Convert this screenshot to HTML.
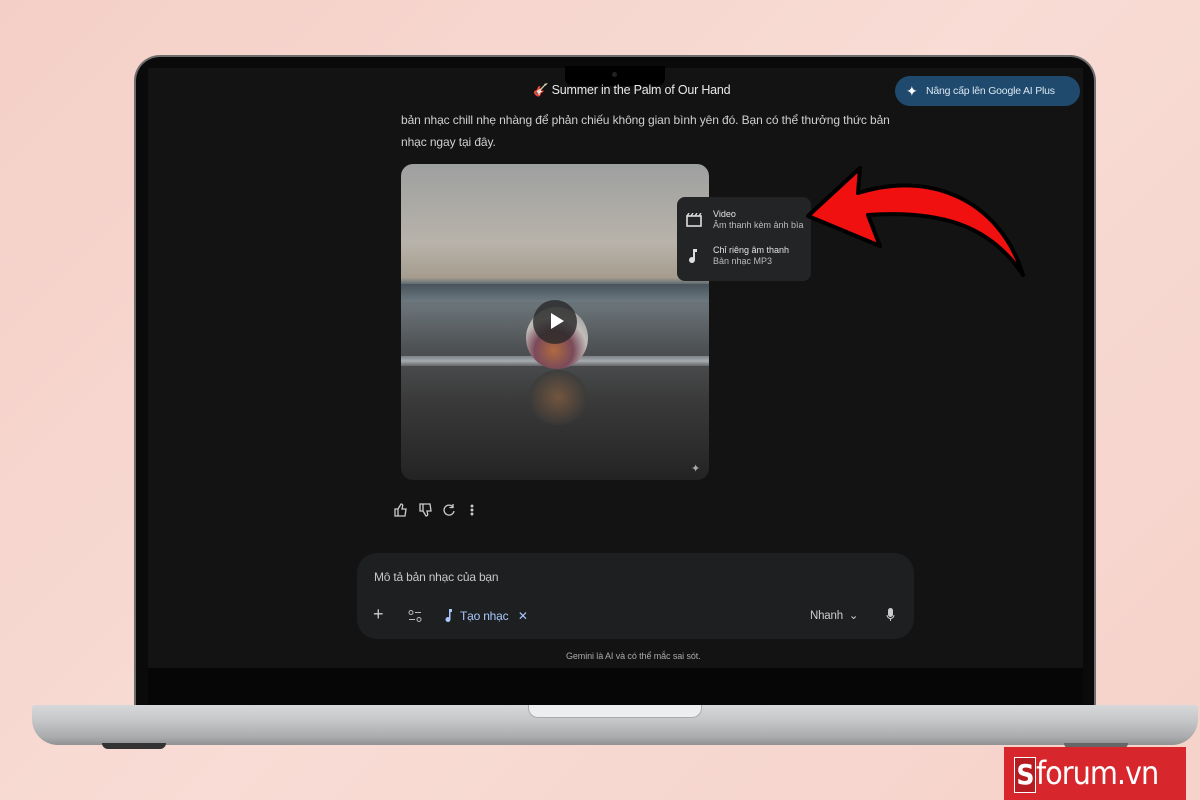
<!DOCTYPE html>
<html><head><meta charset="utf-8"><style>
*{margin:0;padding:0;box-sizing:border-box}
body{width:1200px;height:800px;overflow:hidden;position:relative;background:linear-gradient(135deg,#f4cfc7,#f8dcd5 50%,#f5d2ca);font-family:"Liberation Sans","Noto Sans CJK SC",sans-serif}
.abs{position:absolute}
</style></head><body>
<div class="abs" style="left:134px;top:55px;width:962px;height:652px;background:#0a0a0a;border-radius:26px 26px 0 0;border:2px solid #6d6d6d;border-bottom:none"></div>
<div class="abs" style="left:148px;top:68px;width:935px;height:600px;background:#131314"></div>
<div class="abs" style="left:148px;top:668px;width:935px;height:37px;background:#060606"></div>
<div class="abs" style="left:565px;top:66px;width:100px;height:20px;background:#000;border-radius:0 0 8px 8px"></div>
<div class="abs" style="left:612px;top:72px;width:5px;height:5px;border-radius:50%;background:#222"></div>
<div class="abs" style="left:32px;top:705px;width:1166px;height:40px;background:linear-gradient(#d6d8da,#c4c6c8 40%,#a9abad 80%,#8f9193);border-radius:3px 3px 26px 26px"></div>
<div class="abs" style="left:528px;top:705px;width:174px;height:13px;background:#eceef0;border-radius:0 0 10px 10px;border:1px solid #aaa;border-top:none"></div>
<div class="abs" style="left:102px;top:743px;width:64px;height:6px;background:#333;border-radius:0 0 6px 6px"></div>
<div class="abs" style="left:1064px;top:743px;width:64px;height:6px;background:#666;border-radius:0 0 6px 6px"></div>
<div class="abs" style="left:533px;top:83px;font-size:12.5px;color:#e8e8e8;letter-spacing:-0.2px">🎸 Summer in the Palm of Our Hand</div>
<div class="abs" style="left:895px;top:76px;width:185px;height:30px;background:#1f4a6e;border-radius:15px;color:#dbe6f0;font-size:10.5px;line-height:30px;padding-left:31px;letter-spacing:-0.2px">Nâng cấp lên Google AI Plus<span class="abs" style="left:11px;top:0;font-size:14px;color:#fff">✦</span></div>
<div class="abs" style="left:401px;top:109px;width:510px;font-size:12px;line-height:22px;color:#d0d0d0;letter-spacing:-0.1px">bản nhạc chill nhẹ nhàng để phản chiếu không gian bình yên đó. Bạn có thể thưởng thức bản nhạc ngay tại đây.</div>
<div class="abs" style="left:401px;top:164px;width:308px;height:316px;border-radius:12px;overflow:hidden;background:linear-gradient(#9ea0a0 0%,#b8b3aa 25%,#a59c8e 36%,#5e6a72 38%,#6a7378 45%,#4f5254 58%,#3a3a3a 75%,#232323 100%)">
<div class="abs" style="left:0;top:120px;width:308px;height:18px;background:linear-gradient(#48535a,#6d7a82)"></div>
<div class="abs" style="left:0;top:192px;width:308px;height:10px;background:linear-gradient(#7c8388,#a5abaf,#666)"></div>
<div class="abs" style="left:125px;top:143px;width:62px;height:62px;border-radius:50%;background:radial-gradient(circle at 45% 70%,#b06a40,#7a4a5a 35%,#c0bcb8 60%,#8a8f92)"></div>
<div class="abs" style="left:128px;top:206px;width:58px;height:55px;border-radius:50%;background:radial-gradient(#8a6040,#3a3a38 70%);opacity:.7"></div>
<div class="abs" style="left:132px;top:136px;width:44px;height:44px;border-radius:50%;background:rgba(40,40,40,.8)"></div>
<div class="abs" style="left:150px;top:149px;width:0;height:0;border-left:13px solid #fff;border-top:8px solid transparent;border-bottom:8px solid transparent"></div>
<div class="abs" style="left:290px;top:298px;color:#aaa;font-size:11px">✦</div>
</div>
<div class="abs" style="left:677px;top:197px;width:134px;height:84px;background:#232426;border-radius:8px;font-size:9px;color:#e3e3e3">
<svg class="abs" style="left:9px;top:16px" width="16" height="14" viewBox="0 0 16 14"><rect x="1" y="3" width="14" height="10" fill="none" stroke="#ddd" stroke-width="1.6"/><path d="M1 3L3 0M5 3L7 0M9 3L11 0M13 3L15 0" stroke="#ddd" stroke-width="1.4"/></svg>
<div class="abs" style="left:36px;top:12px;line-height:11px">Video<br><span style="color:#bbb">Âm thanh kèm ảnh bìa</span></div>
<svg class="abs" style="left:11px;top:52px" width="10" height="14" viewBox="0 0 10 14"><path d="M5 0h4v3H7v8a3 3 0 1 1-2-2.8z" fill="#ddd"/></svg>
<div class="abs" style="left:36px;top:48px;line-height:11px">Chỉ riêng âm thanh<br><span style="color:#bbb">Bản nhạc MP3</span></div>
</div>
<svg class="abs" style="left:790px;top:160px" width="250" height="125" viewBox="790 160 250 125">
<path d="M808 216 L860 168 L858 193 C930 170 1000 200 1023 275 C990 225 940 210 868 215 L880 246 Z" fill="#f01010" stroke="#000" stroke-width="4" stroke-linejoin="round"/>
</svg>
<svg class="abs" style="left:394px;top:503px" width="84" height="14" viewBox="0 0 84 14" fill="none" stroke="#ccc" stroke-width="1.3">
<path d="M1 6h3v7H1zM4 6l3-5c1.5 0 2 1 1.5 2.5L8 6h4l-1 7H4"/>
<path d="M26 8h3V1h-3zM29 8l3 5c1.5 0 2-1 1.5-2.5L33 8h4l-1-7h-7"/>
<path d="M59 4a5 5 0 1 0 1 4M59 1v3.5h-3.5"/>
<circle cx="78" cy="3" r=".8" fill="#ccc"/><circle cx="78" cy="7" r=".8" fill="#ccc"/><circle cx="78" cy="11" r=".8" fill="#ccc"/>
</svg>
<div class="abs" style="left:357px;top:553px;width:557px;height:86px;background:#1e1f20;border-radius:20px">
<div class="abs" style="left:17px;top:17px;font-size:12px;color:#c8c8c8;letter-spacing:-0.2px">Mô tả bản nhạc của bạn</div>
<div class="abs" style="left:16px;top:51px;font-size:18px;color:#ccc">+</div>
<svg class="abs" style="left:51px;top:57px" width="14" height="12" viewBox="0 0 14 12"><circle cx="3" cy="2.5" r="2" fill="none" stroke="#bbb"/><path d="M7 2.5h6M1 9.5h6" stroke="#bbb"/><circle cx="11" cy="9.5" r="2" fill="none" stroke="#bbb"/></svg>
<svg class="abs" style="left:88px;top:56px" width="8" height="13" viewBox="0 0 8 13"><path d="M4 0h3v3H5.5v7.5a2.5 2.5 0 1 1-1.5-2.3z" fill="#a8c7fa"/></svg>
<div class="abs" style="left:103px;top:56px;font-size:12px;color:#a8c7fa;letter-spacing:-0.2px">Tạo nhạc &nbsp; ✕</div>
<div class="abs" style="left:453px;top:55px;font-size:11.5px;color:#ccc;letter-spacing:-0.2px">Nhanh &nbsp;⌄</div>
<svg class="abs" style="left:529px;top:55px" width="9" height="14" viewBox="0 0 9 14"><rect x="2" y="0" width="5" height="9" rx="2.5" fill="#ccc"/><path d="M1 7a3.5 3.5 0 0 0 7 0M4.5 10.5V13" stroke="#ccc" fill="none"/></svg>
</div>
<div class="abs" style="left:566px;top:651px;font-size:9px;color:#aaa;letter-spacing:-0.1px">Gemini là AI và có thể mắc sai sót.</div>
<div class="abs" style="left:1004px;top:747px;width:182px;height:53px;background:#d7262c;color:#fff;font-size:32px;line-height:53px;padding-left:10px;font-family:'DejaVu Sans Condensed','Liberation Sans Narrow',sans-serif;font-weight:200;letter-spacing:-1px"><span style="display:inline-block;border:1px solid #fff;width:22px;line-height:34px;text-align:center;background:#b51d22;font-weight:bold;font-size:28px;vertical-align:middle">S</span>forum.vn</div>
</body></html>
